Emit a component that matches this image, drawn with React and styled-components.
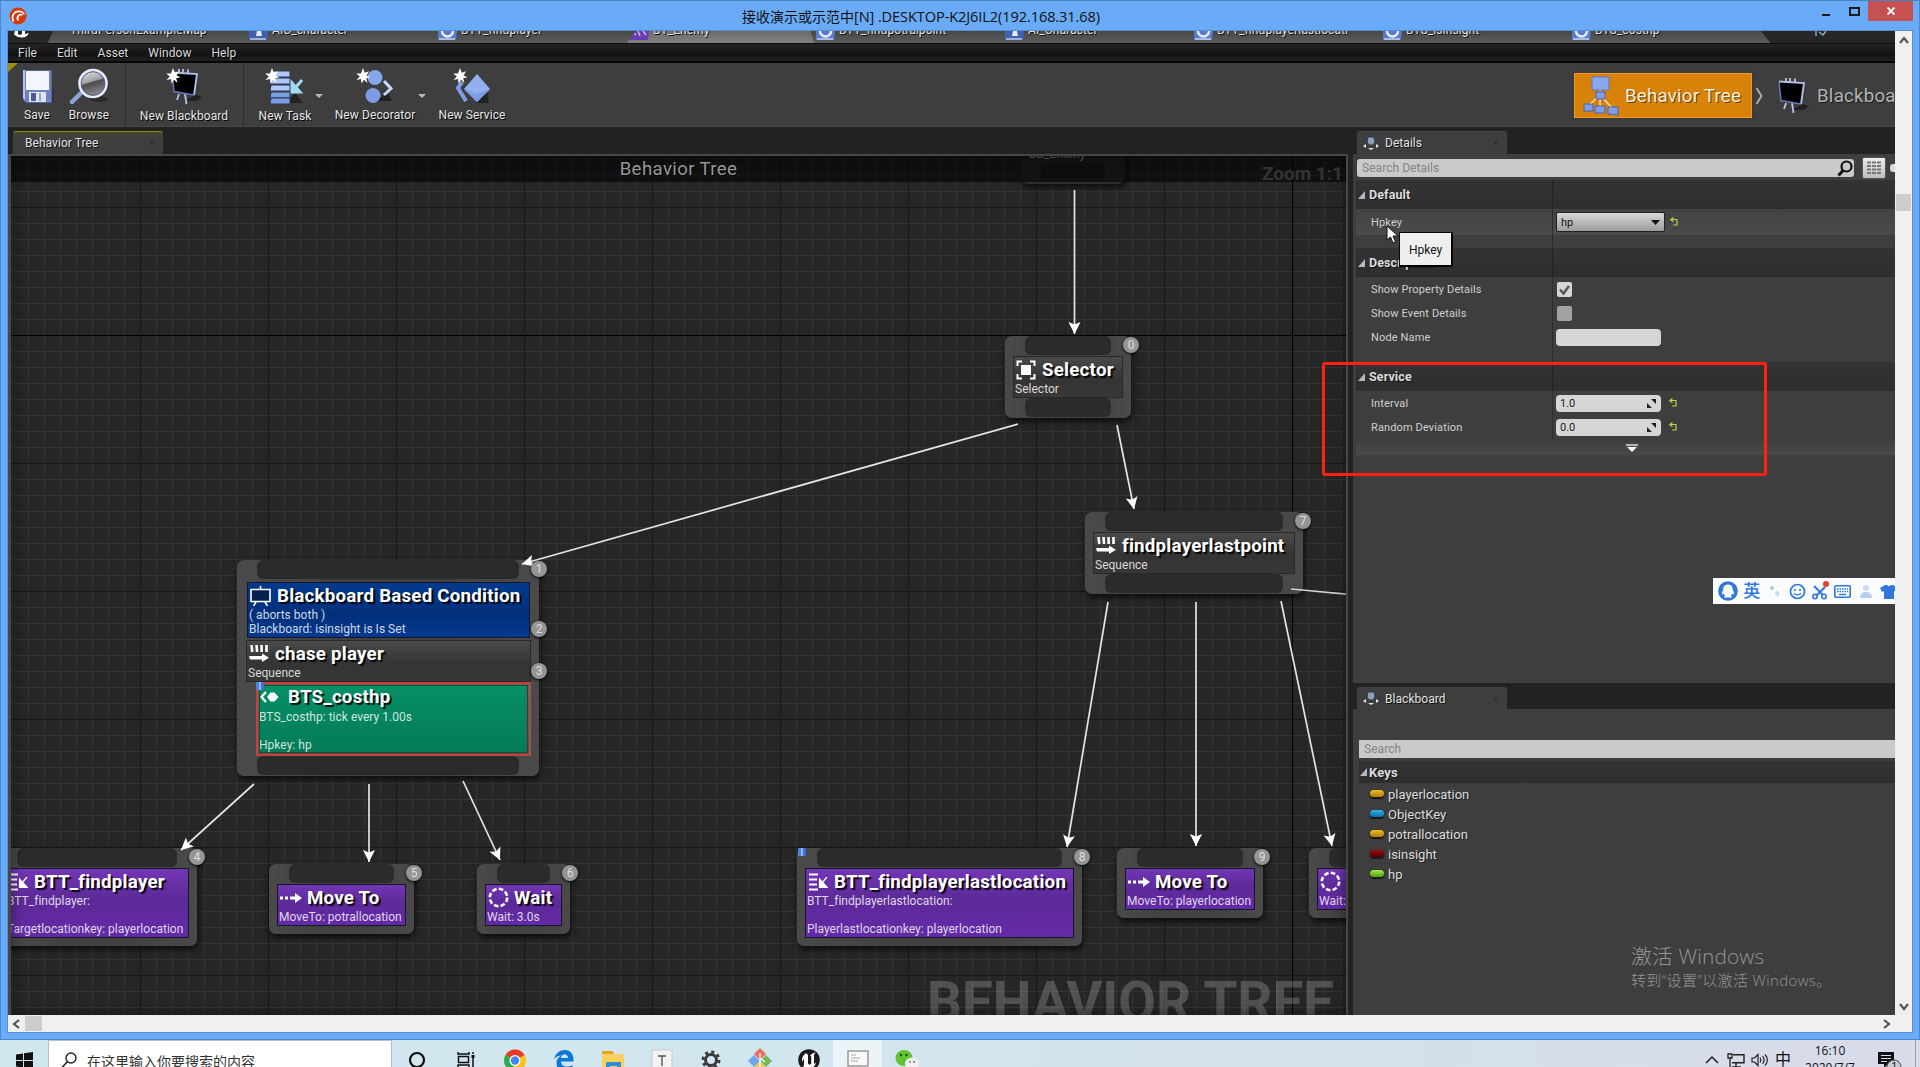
import React from "react";
import styled, { createGlobalStyle, css } from "styled-components";

const Global = createGlobalStyle`
  * { box-sizing: border-box; }
  html, body { margin: 0; padding: 0; overflow: hidden; }
  body { font-family: Roboto, "Noto Sans CJK SC", sans-serif; color: #d4d4d4; }
  svg { display: block; flex: none; }
`;

/* ---------- window frame ---------- */
const Screen = styled.div`
  width: 1920px; height: 1067px; display: flex; flex-direction: column; overflow: hidden;
`;
const Frame = styled.div`
  position: relative; height: 1040px; width: 1920px; background: #6aabf7;
  border: 1px solid #4a87cf; border-top-color: #4784bd; padding: 0 7px 7px;
  display: flex; flex-direction: column;
`;
const TitleBar = styled.div`
  height: 29px; flex: none; display: flex; align-items: flex-start;
`;
const TitleLogo = styled.div`width: 734px; padding: 6px 0 0 1px;`;
const TitleText = styled.div`
  color: #111; font: 14.6px "Open Sans", "Noto Sans CJK SC", sans-serif; line-height: 31px;
  letter-spacing: -0.11px; white-space: nowrap;
  span { font-size: 14px; letter-spacing: 0; }
`;
const Controls = styled.div`width: 160px; display: flex; justify-content: flex-end; margin: 0 -1px 0 auto;`;
const Close = styled.div`
  width: 45px; height: 20px; background: #c75050; display: flex; align-items: center; justify-content: center;
`;
const CtlBox = styled.div`width: 28px; height: 20px; display: flex; align-items: center; justify-content: center;`;
const Client = styled.div`
  flex: 1; min-height: 0; display: grid; grid-template-columns: 1887px 17px; grid-template-rows: 984px 17px;
  outline: 1px solid #5490d2;
`;
const VBar = styled.div`
  background: #f0f0f0; display: flex; flex-direction: column; align-items: center; padding: 5px 0 4px;
`;
const VThumb = styled.div`width: 15px; height: 17px; background: #cdcdcd; margin-top: 150px; margin-bottom: auto;`;
const HBar = styled.div`
  grid-column: 1 / 3; background: #f0f0f0; display: flex; align-items: center; padding: 0 21px 0 4px;
`;
const HThumb = styled.div`width: 17px; height: 15px; background: #cdcdcd; margin-left: 5px; margin-right: auto;`;
const Editor = styled.div`
  position: relative; overflow: hidden; background: #222; display: flex; flex-direction: column;
`;

/* ---------- document tabs and menu ---------- */
const DocTabs = styled.div`
  height: 13px; flex: none; display: flex; background: linear-gradient(#474747, #5c5c5c);
  border-bottom: 1px solid #0c0c0c; overflow: hidden;
`;
const DocHome = styled.div`width: 45px; height: 12px; background: #272727; clip-path: polygon(0 0, 100% 0, 88% 100%, 0 100%); padding-left: 5px;`;
const DocTab = styled.div`
  width: ${(p) => p.w || 189}px; height: 12px; overflow: hidden; display: flex; gap: 4px; flex: none;
  background: ${(p) => (p.$active ? "linear-gradient(#6a6a6a,#828282)" : "transparent")};
  padding-left: ${(p) => p.pad || 0}px;
  clip-path: ${(p) => (p.$active ? "polygon(5% 0, 97% 0, 99% 100%, 0 100%)" : "none")};
`;
const DocLabel = styled.span`
  font-size: 12px; line-height: 14px; margin-top: -8px; color: #e2e2e2; white-space: nowrap; text-shadow: 1px 1px 0 #111; letter-spacing: .1px;
`;
const DocEnd = styled.div`flex: 1; background: #262626; clip-path: polygon(0 0, 100% 0, 100% 100%, 7% 100%); padding-left: 52px;`;
const MenuBar = styled.div`
  height: 19px; flex: none; background: linear-gradient(#242424, #131313 60%, #202020);
  border-bottom: 2px solid #060606; display: flex; align-items: center; padding-left: 10px; gap: 20px;
  font-size: 12px; color: #dadada; text-shadow: 1px 1px 0 #000; letter-spacing: .05px;
`;

/* ---------- toolbar ---------- */
const Toolbar = styled.div`
  height: 64px; flex: none; background: #3e3e3e; border-bottom: 1px solid #484848; display: flex; padding-left: 4px;
  position: relative;
`;
const Corner = styled.div`
  position: absolute; left: 0; top: 0; width: 10px; height: 9px; background: #a08c14; clip-path: polygon(0 0, 100% 0, 0 100%);
`;
const Tool = styled.div`
  width: ${(p) => p.w}px; margin-left: ${(p) => p.ml || 0}px; display: flex; flex-direction: column; align-items: center; padding-top: 5px;
`;
const ToolLabel = styled.div`
  font-size: 12px; line-height: 16px; margin-top: 3px; white-space: nowrap; color: #e6e6e6; text-shadow: 1px 1px 0 #000; letter-spacing: .1px;
`;
const Sep = styled.div`width: 1px; background: #2b2b2b; margin: 2px 0 0 ${(p) => p.ml}px;`;
const Caret = styled.div`width: 8px; height: 4px; margin-top: 31px; background: #b8b8b8; clip-path: polygon(0 0, 100% 0, 50% 100%);`;
const Modes = styled.div`margin-left: auto; display: flex; align-items: center; width: 321px; font-size: 18.7px; letter-spacing: .22px; padding-top: 2px;`;
const Mode = styled.div`
  height: 45px; display: flex; align-items: center; white-space: nowrap; flex: none;
  ${(p) => p.$on ? css`width: 178px; background: #d9820a; border: 1px solid #f09a1e; outline: 2px solid #3a3c42; padding-left: 8px; color: #f4ecdc; gap: 6px;`
    : css`padding-left: 9px; color: #b2b2b2; gap: 8px;`}
  text-shadow: 1px 1px 0 rgba(0,0,0,.55);
`;
const ModeArrow = styled.div`width: 12px; padding-left: 3px;`;

/* ---------- docking ---------- */
const Dock = styled.div`flex: 1; min-height: 0; display: flex; padding-top: 4px;`;
const GraphPane = styled.div`width: 1340px; margin-right: 5px; display: flex; flex-direction: column;`;
const SidePane = styled.div`flex: 1; min-width: 0; display: flex; flex-direction: column;`;
const TabStrip = styled.div`height: ${(p) => p.h || 23}px; flex: none; display: flex; padding-left: ${(p) => p.pl}px;`;
const Tab = styled.div`
  width: 150px; background: ${(p) => (p.$active ? "linear-gradient(#47472f, #3e3e3e 30%)" : "#3e3e3e")};
  border-top: ${(p) => (p.$active ? "1px solid #8c8c22" : "1px solid #444")}; border-radius: 3px 3px 0 0;
  display: flex; align-items: center; gap: 6px; padding: 0 9px 0 ${(p) => p.pl}px;
  font-size: 12px; color: #e2e2e2; text-shadow: 1px 1px 0 #111; white-space: nowrap; letter-spacing: .05px;
`;
const TabX = styled.span`margin-left: auto; font-size: 9px; color: #262626; text-shadow: none;`;

/* ---------- graph ---------- */
const Canvas = styled.div`
  position: relative; flex: 1; overflow: hidden; border: solid #474747; border-width: 2px 2px 0 3px;
  background-color: #262626;
`;
const Shade = styled.div`position: absolute; inset: 0; box-shadow: inset 0 0 14px rgba(0,0,0,.5);`;
const Plane = styled.div`position: absolute; left: -11px; top: -156px; width: 1360px; height: 1020px;`;
const Wires = styled.svg`position: absolute; left: 0; top: 0;`;
const GraphTitle = styled.div`
  position: absolute; left: 0; right: 0; top: 0; height: 26px; background: rgba(0,0,0,.58);
  display: flex; justify-content: center; align-items: center; font-size: 18.7px; letter-spacing: .35px; color: #979797; text-shadow: 1px 1px 0 #000;
`;
const Zoom = styled.div`position: absolute; right: 3px; top: 6px; font-size: 19px; font-weight: 700; color: #333; line-height: 24px;`;
const Watermark = styled.div`
  position: absolute; left: 916px; top: 814px; font-size: 56px; line-height: 64px; font-weight: 700; white-space: nowrap;
  color: rgba(255,255,255,.2); transform-origin: 0 0; transform: scaleX(.978);
`;
const NodeBox = styled.div`
  position: absolute; left: ${(p) => p.x}px; top: ${(p) => p.y}px; width: ${(p) => p.w}px; height: ${(p) => p.h}px;
  background: linear-gradient(90deg, #4a4a4a, #424242 30%, #424242 70%, #4a4a4a); border-radius: 7px;
  box-shadow: 1px 3px 6px rgba(0,0,0,.75); display: flex; flex-direction: column; padding: 0 8px;
`;
const RootNode = styled(NodeBox)`background: #2e2e2e; color: #999;`;
const Pin = styled.div`height: 19px; flex: none; margin: 0 12px; background: #2b2b2b; border-radius: 6px;`;
const fills = {
  gray: "linear-gradient(#4a4a4a, #343434 55%, #383838)",
  blue: "linear-gradient(#043a8c, #022f7c 60%, #043a8e)",
  green: "linear-gradient(#069068, #047a58)",
  purple: "linear-gradient(#7236b4, #5c2a98 45%, #642aa8)",
};
const Part = styled.div`
  height: ${(p) => p.h}px; margin: ${(p) => p.m || "1px 0 0"}; flex: none; padding-left: ${(p) => (p.$picked ? 0 : 1)}px;
  background: ${(p) => fills[p.$tone]}; border: 1px solid ${(p) => (p.$tone === "gray" ? "#292929" : "#15152c")};
  ${(p) => p.$picked && css`border: 2px solid #c8403e; outline: 1px solid #6a2624; outline-offset: -4px; padding-left: 1px;`}
`;
const Head = styled.div`display: flex; align-items: center; height: ${(p) => (p.$tall ? 26 : 25)}px; gap: ${(p) => p.g || 6}px; padding-left: 1px;`;
const Name = styled.span`
  font-size: 18.7px; font-weight: 700; letter-spacing: .24px; color: #fff; white-space: nowrap; text-shadow: 2px 2px 1px rgba(0,0,0,.9);
`;
const Line = styled.div`
  font-size: 12px; line-height: 14px; height: 14px; color: rgba(255,255,255,.82); white-space: nowrap; letter-spacing: .02px;
`;
const Badge = styled.div`
  position: absolute; left: ${(p) => p.x - 8}px; top: ${(p) => p.y - 8}px; width: 16px; height: 16px; border-radius: 50%;
  background: #959595; color: #dedede; font-size: 12px; line-height: 16px; text-align: center; box-shadow: 0 1px 3px #000;
`;
const Flag = styled.div`
  position: absolute; left: ${(p) => p.x}px; top: ${(p) => p.y}px; width: 8px; height: 8px;
  background: linear-gradient(90deg, #4f7fe0 30%, #b9d0ff 50%, #3f6fd6 70%);
`;

/* ---------- side panels ---------- */
const Panel = styled.div`
  height: ${(p) => (p.h ? p.h + "px" : "auto")}; flex: ${(p) => (p.h ? "none" : "1")}; background: #3e3e3e;
  padding-left: ${(p) => p.pl}px; display: flex; flex-direction: column; position: relative;
`;
const SearchRow = styled.div`display: flex; height: 26px; padding: 2px 0 0 1px; align-items: center; flex: none;`;
const Search = styled.div`
  width: ${(p) => p.w}px; height: 18px; background: #cacaca; border-radius: ${(p) => p.r || "3px"}; color: #848484; font-size: 12px;
  display: flex; align-items: center; justify-content: space-between; padding: 0 1px 0 5px; flex: none; letter-spacing: .05px;
`;
const ViewBtn = styled.div`
  width: 27px; height: 22px; margin-left: 8px; background: linear-gradient(#ededed, #bcbcbc); border-radius: 2px; border: 1px solid #555;
  display: flex; align-items: center; justify-content: center;
`;
const EyeDot = styled.div`width: 6px; height: 8px; margin-left: 4px; border-radius: 50% 0 0 50%; background: #ddd;`;
const Category = styled.div`
  height: ${(p) => p.h}px; flex: none; background: linear-gradient(#333, #2e2e2e); display: grid; grid-template-columns: 197px 1fr;
  align-items: center; font-size: ${(p) => p.fs || 12.5}px; font-weight: 700; color: #dcdcdc; text-shadow: 1px 1px 0 #161616; letter-spacing: .1px;
`;
const CatName = styled.div`
  display: flex; align-items: center; gap: ${(p) => (p.$plain ? 2 : 4)}px; padding-left: ${(p) => (p.$plain ? 1 : 2)}px; height: 100%;
  border-right: ${(p) => (p.$plain ? "0" : "1px solid #232323")};
`;
const Row = styled.div`
  height: ${(p) => p.h || 24}px; flex: none; display: grid; grid-template-columns: 197px 1fr; font-size: 11px; color: #cfcfcf;
  background: ${(p) => (p.$hover ? "linear-gradient(#424242,#4b4b4b)" : "transparent")};
`;
const RowName = styled.div`display: flex; align-items: center; padding-left: 15px; border-right: 1px solid #2c2c2c; letter-spacing: .13px;`;
const RowValue = styled.div`display: flex; align-items: center; padding-left: ${(p) => p.pl || 3}px; gap: ${(p) => p.g || 8}px;`;
const Combo = styled.div`
  width: 109px; height: 20px; background: linear-gradient(#d8d8d8, #9c9c9c); border: 1px solid #222; border-radius: 2px; color: #151515;
  display: flex; align-items: center; justify-content: space-between; padding: 0 4px;
`;
const Field = styled.div`
  width: 105px; height: 17px; background: #d6d6d6; border-radius: 4px; color: #222; display: flex; align-items: center;
  justify-content: space-between; padding: 0 5px 0 4px;
`;
const Check = styled.div`width: 15px; height: 15px; background: ${(p) => (p.$on ? "#d6d6d6" : "#a2a2a2")}; border-radius: 2px;`;
const Advanced = styled.div`
  height: 13px; flex: none; margin-top: 3px; background: linear-gradient(#424242, #494949); display: flex; justify-content: center;
  padding: 2px 0 0 13px;
`;
const KeyRow = styled.div`height: 20px; display: flex; align-items: center; gap: 4px; padding-left: 11px; font-size: 13px; color: #dcdcdc; text-shadow: 1px 1px 0 #222;`;
const Pill = styled.span`
  width: 14px; height: 7px; border-radius: 4px; background: linear-gradient(${(p) => p.c}, ${(p) => p.d});
  box-shadow: 0 2px 1px #191919, 0 0 1px #111; margin-top: -2px;
`;
const Gap = styled.div`height: ${(p) => p.h}px; flex: none;`;

/* ---------- overlays ---------- */
const RedBox = styled.div`position: absolute; left: 1322px; top: 362px; width: 445px; height: 114px; border: 3px solid #ff2212; border-radius: 3px;`;
const Tip = styled.div`
  position: absolute; left: 1399px; top: 232px; width: 54px; height: 35px; background: #efefef; border: 2px solid #060606; border-top-width: 1px; border-left-width: 1px;
  color: #111; font-size: 12px; display: flex; align-items: center; justify-content: center; padding-top: 2px;
`;
const Cursor = styled.svg`position: absolute; left: 1386px; top: 225px;`;
const Ime = styled.div`
  position: absolute; left: 1713px; top: 578px; width: 182px; height: 26px; background: #fafcff; overflow: hidden;
  display: flex; align-items: center; padding-left: 5px; gap: 5.300px; color: #2f78d8; font-size: 17px; font-weight: 500; line-height: 20px;
`;
const Activate = styled.div`
  position: absolute; left: 1631px; top: 941px; color: #959595; white-space: nowrap; font-family: "Open Sans", "Noto Sans CJK SC", sans-serif;
  font-weight: 300;
`;
const ActBig = styled.div`font-size: 20.8px; line-height: 30px; letter-spacing: .15px;`;
const ActSmall = styled.div`font-size: 15px; line-height: 18px; letter-spacing: .36px;`;

/* ---------- taskbar ---------- */
const Taskbar = styled.div`
  height: 27px; flex: none; display: flex; overflow: hidden; background: linear-gradient(90deg, #d0e6ee 0, #d2e6ef 45%, #d5dfec 75%, #d8dbea 100%);
`;
const StartBtn = styled.div`width: 48px; padding: 12px 0 0 16px; flex: none;`;
const SearchBox = styled.div`
  width: 344px; flex: none; background: #fff; border: 1px solid #b9c0c4; border-bottom: 0; display: flex; padding: 11px 0 0 12px; gap: 10px;
  font: 14px "Noto Sans CJK SC", sans-serif; line-height: 18px; color: #333; white-space: nowrap;
`;
const TaskItem = styled.div`
  width: 49px; height: 27px; flex: none; display: flex; justify-content: center; padding-top: 8px;
  background: ${(p) => (p.$on ? "#eaf3f6" : "transparent")};
`;
const Tray = styled.div`margin-left: auto; width: 215px; display: flex; flex: none; color: #111;`;
const TrayCell = styled.div`
  width: ${(p) => p.w}px; padding: ${(p) => p.t}px 0 0 ${(p) => p.l || 0}px; flex: none; font-size: 16px; line-height: 20px;
`;
const Clock = styled.div`
  width: 76px; font: 12px "Open Sans", sans-serif; line-height: 17px; padding-top: 2px; text-align: center; height: 40px; flex: none;
`;
const ShowDesk = styled.div`width: 1px; background: #9aa3ac; margin-left: 21px;`;

/* ---------- icons ---------- */
const Star = () => <path d="M7 0 L8.7 4.8 L13 3.2 L10.6 7.4 L14.5 9.3 L10.2 10.2 L11.5 15 L8 11.8 L5.5 15.5 L5 11 L.5 12 L3.8 8.4 L.2 5.6 L5 5.5Z" fill="#fff" />;
const SaveI = () => (
  <svg width="33" height="36" viewBox="0 0 33 36"><path d="M5 33 L33 35 L32 18Z" fill="#1c1c1c" opacity=".6" /><path d="M2 2h29v33H5l-3-3z" fill="#7080bc" stroke="#39436c" /><path d="M5 3h23v19H5z" fill="#f4f6ff" /><path d="M8 24h17v10H8z" fill="#e2e6f4" /><path d="M10 25h5v8h-5z" fill="#4c5a90" /><path d="M18 25h2v8h-2z" fill="#98a2cc" /><path d="M2 2l2 0v30l-2-2z" fill="#b8c4ec" /></svg>
);
const BrowseI = () => (
  <svg width="40" height="36" viewBox="0 0 40 36"><defs><linearGradient id="lens" x1="0" x2="0.3" y1="0" y2="1"><stop offset="0" stopColor="#f4f4f6" /><stop offset=".5" stopColor="#a0a0a2" /><stop offset=".56" stopColor="#4c4c4e" /><stop offset="1" stopColor="#8a8a8c" /></linearGradient></defs><ellipse cx="30" cy="31" rx="9" ry="3" fill="#1c1c1c" opacity=".6" /><path d="M12 25 L3 34" stroke="#8fa2d8" strokeWidth="4.500" strokeLinecap="round" /><circle cx="24" cy="15.500" r="13.500" fill="url(#lens)" stroke="#e6ecff" strokeWidth="2.600" /><circle cx="24" cy="15.500" r="11.800" fill="none" stroke="#56607e" /></svg>
);
const Easel = ({ star }) => (
  <svg width="36" height="37" viewBox="0 0 36 37"><path d="M17 33h14l5-4-6-2z" fill="#161616" opacity=".7" /><path d="M13 26l-2 6M19 26l1.500 10M13 5V1M17 5V1M22 5V1.500" stroke="#b7c4e8" strokeWidth="1.800" /><path d="M6 4.500 L31 6 L28 27 L8 23.500Z" fill="#000" /><path d="M6 4.500L31 6L28 27" fill="none" stroke="#b4c2ea" strokeWidth="1.800" /><path d="M6 4.500L8 23.500L28 27" fill="none" stroke="#6478b4" strokeWidth="1.500" />{star && <Star />}</svg>
);
const TaskI = () => (
  <svg width="40" height="37" viewBox="0 0 40 37"><path d="M22 35h16l-8-10z" fill="#161616" opacity=".7" />{[3, 10, 17, 24, 30].map((y) => <path key={y} d={`M6 ${y}h19v6H5z`} fill={y > 20 ? "#7c9ce2" : "#b0c6f6"} stroke="#2c3654" strokeWidth="1" />)}<path d="M37 12 L31 19M27 15v9h8z" stroke="#9fdcf4" strokeWidth="3" fill="#9fdcf4" /><Star /></svg>
);
const DecoI = () => (
  <svg width="38" height="36" viewBox="0 0 38 36"><path d="M20 33h16l-4-8z" fill="#161616" opacity=".7" /><circle cx="19" cy="9.500" r="7.500" fill="#86a6ea" /><circle cx="17" cy="27.500" r="7.500" fill="#7c9ce4" /><path d="M28 13 L35 20.500 L28 27" stroke="#c7d8fa" strokeWidth="3" fill="none" /><Star /></svg>
);
const ServI = () => (
  <svg width="38" height="36" viewBox="0 0 38 36"><path d="M22 35h14l-2-12z" fill="#161616" opacity=".7" /><path d="M9 14 L5 20 L13 33" stroke="#7e9ee6" strokeWidth="4" fill="none" /><path d="M24 6 L37 21 L24 34 L11 21Z" fill="#92b0f0" /><path d="M11 21 L24 34 L37 21 L24 26Z" fill="#7c9ce4" /><Star /></svg>
);
const TreeI = () => (
  <svg width="36" height="40" viewBox="0 0 36 40"><path d="M17 12v22M17 19L4 31M17 19l13 14" stroke="#fbe6c0" strokeWidth="1.500" /><path d="M9 1h17v13H9z" fill="#8aa8f0" stroke="#5a76c0" /><path d="M13 16h9v7h-9zM1 28h9v7H1zM12 30h10v7H12zM25 31h10v8l-10-1z" fill="#7e9eea" stroke="#4a63a6" /></svg>
);
const PanelI = () => (
  <svg width="16" height="15" viewBox="0 0 16 15"><path d="M5 1h6l1 5-2 3H6L4 6z" fill="#8ba0b8" stroke="#26313c" strokeWidth=".8" /><path d="M0 10l3-2v4zM16 10l-3-2v4zM8 14l-3-2h6z" fill="#dfe8ee" /></svg>
);
const Tri = () => <svg width="7" height="8" viewBox="0 0 7 8"><path d="M7 0v8H0z" fill="#b8b8b8" /></svg>;
const Reset = () => <svg width="10" height="10" viewBox="0 0 10 10"><path d="M2 2.500h6v5.500H4M4.500 .5L1.800 2.700l2.700 2" stroke="#c3cc48" strokeWidth="1.200" fill="none" /></svg>;
const Spin = () => <svg width="9" height="9" viewBox="0 0 9 9"><path d="M9 0v5L4 0zM0 9V4l5 5z" fill="#222" /></svg>;
const SelectorI = () => <svg width="20" height="20" viewBox="0 0 20 20"><path d="M1.500 6V1.500H6M14 1.500h4.500V6M18.500 14v4.500H14M6 18.500H1.500V14" fill="none" stroke="#fff" strokeWidth="2" /><path d="M5 5h10v10H5z" fill="#fff" /></svg>;
const SeqI = () => <svg width="20" height="17" viewBox="0 0 20 17"><path d="M2.500 0l.8 7M7.500 0l.6 7M12.500 0l.2 7M17.500 0v7" stroke="#fff" strokeWidth="2.600" /><path d="M0 11h13V8.500l7 4.200-7 4.300v-2.500H1z" fill="#fff" /></svg>;
const BoardI = () => <svg width="21" height="20" viewBox="0 0 21 20"><path d="M1 3.500h19v12H1zM10.500 0v3M6 16l-2.500 4M15 16l2.500 4" fill="#08204e" stroke="#fff" strokeWidth="1.600" /></svg>;
const ServiceI = () => <svg width="19" height="12" viewBox="0 0 19 12"><path d="M6 1L1.500 6 6 11" stroke="#fff" strokeWidth="2.200" fill="none" /><path d="M7 6l3.500-4.500h4L18.500 6l-4 4.500h-4z" fill="#fff" /></svg>;
const BttI = () => <svg width="20" height="18" viewBox="0 0 20 18"><path d="M1 1.500h9M1 6.500h8M1 11.500h8M1 16.500h9" stroke="#fff" strokeWidth="2" /><path d="M19 4L13.500 10.500M11.500 6v8.500h8z" stroke="#fff" strokeWidth="1.200" fill="#fff" /></svg>;
const MoveI = () => <svg width="22" height="12" viewBox="0 0 22 12"><path d="M0 4.500h3v3H0zM5 4.500h3v3H5zM10 4.500h5V1l7 5-7 5V7.500h-5z" fill="#fff" /></svg>;
const WaitI = () => <svg width="21" height="21" viewBox="0 0 21 21"><circle cx="10.500" cy="10.500" r="8.700" fill="none" stroke="#fff" strokeWidth="2.600" strokeDasharray="4.600 2.233" /></svg>;
const Loupe = () => <svg width="16" height="17" viewBox="0 0 16 17"><circle cx="9.500" cy="6.500" r="5" fill="none" stroke="#111" strokeWidth="2.200" /><path d="M6 10.500L1.500 15.500" stroke="#111" strokeWidth="3" /></svg>;
const BarArrow = ({ d, w = 10, h = 8 }) => <svg width={w} height={h} viewBox={`0 0 ${w} ${h}`}><path d={d} fill="none" stroke="#555" strokeWidth="2.200" /></svg>;

/* ---------- data ---------- */
const docs = [
  ["AIC_character*", "#3f62b0"], ["BTT_findplayer*", "#5a7cc8"], ["BT_Enemy*", "#6a3cb0"], ["BTT_findpotralpoint*", "#5a7cc8"],
  ["AI_Character", "#3f62b0"], ["BTT_findplayerlastlocati*", "#5a7cc8"], ["BTS_isinsight*", "#5a7cc8"], ["BTS_costhp*", "#5a7cc8"],
];
const icons = { selector: SelectorI, seq: SeqI, board: BoardI, service: ServiceI, btt: BttI, move: MoveI, wait: WaitI };
const nodes = [
  { x: 1005, y: 336, w: 126, h: 82, out: 1, parts: [{ tone: "gray", h: 42, icon: "selector", name: "Selector", lines: ["Selector"] }] },
  { x: 1085, y: 512, w: 218, h: 82, out: 1, parts: [{ tone: "gray", h: 42, icon: "seq", name: "findplayerlastpoint", lines: ["Sequence"] }] },
  { x: 237, y: 560, w: 302, h: 216, out: 1, parts: [
    { tone: "blue", h: 56, m: "3px 1px 0 2px", icon: "board", name: "Blackboard Based Condition", lines: ["( aborts both )", "Blackboard: isinsight is Is Set"] },
    { tone: "gray", h: 42, m: "2px 0 0 1px", icon: "seq", name: "chase player", lines: ["Sequence"] },
    { tone: "green", h: 74, m: "0 0 0 11px", picked: 1, icon: "service", name: "BTS_costhp", lines: ["BTS_costhp: tick every 1.00s", "", "Hpkey: hp"] },
  ] },
  { x: -3, y: 848, w: 200, h: 98, parts: [{ tone: "purple", h: 70, icon: "btt", name: "BTT_findplayer", lines: ["BTT_findplayer:", "", "Targetlocationkey: playerlocation"] }] },
  { x: 269, y: 864, w: 145, h: 70, parts: [{ tone: "purple", h: 42, icon: "move", name: "Move To", lines: ["MoveTo: potrallocation"] }] },
  { x: 477, y: 864, w: 93, h: 70, parts: [{ tone: "purple", h: 42, icon: "wait", name: "Wait", lines: ["Wait: 3.0s"] }] },
  { x: 797, y: 848, w: 285, h: 98, parts: [{ tone: "purple", h: 70, icon: "btt", name: "BTT_findplayerlastlocation", lines: ["BTT_findplayerlastlocation:", "", "Playerlastlocationkey: playerlocation"] }] },
  { x: 1117, y: 848, w: 146, h: 70, parts: [{ tone: "purple", h: 42, icon: "move", name: "Move To", lines: ["MoveTo: playerlocation"] }] },
  { x: 1309, y: 848, w: 93, h: 70, parts: [{ tone: "purple", h: 42, icon: "wait", name: "Wait", lines: ["Wait: 3.0s"] }] },
];
const headGap = { service: 9, move: 5, wait: 5 };
const badges = [[1131, 345], [539, 569], [539, 629], [539, 671], [197, 857], [414, 873], [570, 873], [1303, 521], [1082, 857], [1262, 857]];
const wires = [
  [1074.5, 190, 1074.5, 334], [1018, 424, 522, 564], [1117, 425, 1134, 509], [254, 784, 181, 850], [369, 784, 369, 862],
  [463, 781, 500, 860], [1108, 602, 1067, 847], [1196, 602, 1196, 846], [1281, 601, 1332, 846],
];
const keys = [["playerlocation", "#f0be28", "#b07c08"], ["ObjectKey", "#36b4ee", "#0a6ca8"], ["potrallocation", "#f0be28", "#b07c08"], ["isinsight", "#9a0a0a", "#5c0000"], ["hp", "#a4e844", "#4fa010"]];

const range = (from, to, step) => Array.from({ length: Math.ceil((to - from) / step) }, (_, i) => from + i * step);

function Grid() {
  return (
    <g shapeRendering="crispEdges">
      {range(12, 1350, 16).map((x) => <path key={"a" + x} d={`M${x + .5} 150V1020`} stroke="#343434" />)}
      {range(159, 1020, 16).map((y) => <path key={"b" + y} d={`M0 ${y + .5}H1350`} stroke="#343434" />)}
      {range(140, 1350, 128).map((x) => <path key={"c" + x} d={`M${x + .5} 150V1020`} stroke={x === 1292 ? "#000" : "#181818"} />)}
      {range(207, 1020, 128).map((y) => <path key={"d" + y} d={`M0 ${y + .5}H1350`} stroke={y === 335 ? "#000" : "#181818"} />)}
    </g>
  );
}

function Graph() {
  return (
    <Canvas>
      <Plane>
        <Wires width="1350" height="1020"><Grid /></Wires>
        {nodes.map((n, i) => (
          <NodeBox key={i} x={n.x} y={n.y} w={n.w} h={n.h}>
            <Pin />
            {n.parts.map((p) => {
              const Icon = icons[p.icon];
              return (
                <Part key={p.name} h={p.h} m={p.m} $tone={p.tone} $picked={p.picked}>
                  <Head g={headGap[p.icon]} $tall={p.picked}><Icon /><Name>{p.name}</Name></Head>
                  {p.lines.map((l, k) => <Line key={k}>{l}</Line>)}
                </Part>
              );
            })}
            {n.out && <Pin />}
          </NodeBox>
        ))}
        <RootNode x={1021} y={120} w={104} h={64}><Gap h={27} /><Line>BB_Enemy</Line></RootNode>
        <Wires width="1350" height="1020">
          <rect x="1041" y="163" width="64" height="18" rx="5" fill="#222" />
          {wires.map(([a, b, c, d]) => (
            <g key={a + "-" + b}>
              <path d={`M${a} ${b}L${c} ${d}`} stroke="#e4e4e4" strokeWidth="1.700" />
              <path transform={`translate(${c} ${d}) rotate(${(Math.atan2(d - b, c - a) * 180) / Math.PI})`} d="M0 0L-12 -6L-9.500 0L-12 6Z" fill="#fff" />
            </g>
          ))}
          <path d="M1291 589L1350 594.500" stroke="#d0d0d0" strokeWidth="1.600" />
        </Wires>
        {badges.map(([x, y], i) => <Badge key={i} x={x} y={y}>{i}</Badge>)}
        <Flag x={256} y={682} /><Flag x={798} y={848} />
      </Plane>
      <Watermark>BEHAVIOR TREE</Watermark>
      <Shade />
      <GraphTitle>Behavior Tree</GraphTitle>
      <Zoom>Zoom 1:1</Zoom>
    </Canvas>
  );
}

function Details() {
  return (
    <Panel h={529} pl={3}>
      <SearchRow>
        <Search w={497}>Search Details<Loupe /></Search>
        <ViewBtn><svg width="14" height="14" viewBox="0 0 14 14"><path d="M0 1.500h14M0 5h14M0 8.500h14M0 12h14" stroke="#777" strokeWidth="2" strokeDasharray="4 1" /></svg></ViewBtn>
        <EyeDot />
      </SearchRow>
      <Category h={29}><CatName><Tri />Default</CatName></Category>
      <Row h={26} $hover><RowName>Hpkey</RowName><RowValue g={4}><Combo>hp<svg width="9" height="5" viewBox="0 0 9 5"><path d="M0 0h9L4.500 5z" fill="#111" /></svg></Combo><Reset /></RowValue></Row>
      <Row h={13}><RowName /></Row>
      <Category h={29}><CatName><Tri />Description</CatName></Category>
      <Row><RowName>Show Property Details</RowName><RowValue pl={4}><Check $on><svg width="15" height="15" viewBox="0 0 15 15"><path d="M3 7.500l3.500 4L12 4" stroke="#555" strokeWidth="2.400" fill="none" /></svg></Check></RowValue></Row>
      <Row><RowName>Show Event Details</RowName><RowValue pl={4}><Check /></RowValue></Row>
      <Row><RowName>Node Name</RowName><RowValue><Field /></RowValue></Row>
      <Row h={13}><RowName /></Row>
      <Category h={29}><CatName><Tri />Service</CatName></Category>
      <Row><RowName>Interval</RowName><RowValue g={7}><Field>1.0<Spin /></Field><Reset /></RowValue></Row>
      <Row><RowName>Random Deviation</RowName><RowValue g={7}><Field>0.0<Spin /></Field><Reset /></RowValue></Row>
      <Advanced><svg width="12" height="9" viewBox="0 0 12 9"><path d="M0 1h12" stroke="#ddd" strokeWidth="1.500" /><path d="M1 3h10L6 8z" fill="#fff" /></svg></Advanced>
    </Panel>
  );
}

function BlackboardPanel() {
  return (
    <Panel pl={6}>
      <Gap h={31} />
      <Search w={540} r="0">Search</Search>
      <Gap h={3} />
      <Category h={22} fs={13}><CatName $plain><Tri />Keys</CatName></Category>
      <Gap h={1} />
      {keys.map(([k, c, d]) => <KeyRow key={k}><Pill c={c} d={d} />{k}</KeyRow>)}
    </Panel>
  );
}

function ImeBar() {
  const b = "#2f78d8";
  return (
    <Ime>
      <svg width="20" height="20" viewBox="0 0 20 20"><circle cx="10" cy="10" r="9.800" fill={b} /><path d="M10 3.500c4 0 4.800 3 4.800 5.500 1.200 2 1.400 3.500 1 4.500l-1.600-1c-.3 1.200-.8 2-1.400 2.600.9.400 1.200.9 1.200 1.400H6c0-.5.3-1 1.200-1.400-.6-.6-1.100-1.400-1.400-2.600l-1.600 1c-.4-1-.2-2.500 1-4.500 0-2.500.8-5.500 4.800-5.500z" fill="#fff" /></svg>
      英
      <svg width="18" height="18" viewBox="0 0 18 18"><circle cx="6" cy="6" r="2" fill="#a9c6ec" /><circle cx="11" cy="11" r="2" fill="#c4d8f2" /><path d="M13 11c0 2-1 3-2 4" stroke="#c4d8f2" strokeWidth="1.500" fill="none" /></svg>
      <svg width="17" height="17" viewBox="0 0 17 17"><circle cx="8.500" cy="8.500" r="7" fill="none" stroke={b} strokeWidth="1.700" /><circle cx="6" cy="7" r="1.100" fill={b} /><circle cx="11" cy="7" r="1.100" fill={b} /><path d="M5 10c1.500 2.500 5.500 2.500 7 0" stroke={b} strokeWidth="1.400" fill="none" /></svg>
      <svg width="18" height="20" viewBox="0 0 18 20"><path d="M3 5l9 9M14 6l-9 9" stroke={b} strokeWidth="2" /><circle cx="4" cy="15.500" r="2.200" fill="none" stroke={b} strokeWidth="1.600" /><circle cx="13" cy="15.500" r="2.200" fill="none" stroke={b} strokeWidth="1.600" /><circle cx="15" cy="3" r="3" fill="#ee3a26" /></svg>
      <svg width="17" height="13" viewBox="0 0 17 13"><rect x=".8" y=".8" width="15.400" height="11.400" rx="1" fill="none" stroke={b} strokeWidth="1.600" /><path d="M3 4h11M3 6.500h11" stroke={b} strokeWidth="1.500" strokeDasharray="1.500 1" /><path d="M5 9.500h7" stroke={b} strokeWidth="1.400" /></svg>
      <svg width="18" height="15" viewBox="0 0 18 15"><circle cx="9" cy="4" r="3" fill="#c9daf2" /><path d="M3 14c0-4 3-6 6-6s6 2 6 6z" fill="#b8d0f0" /></svg>
      <svg width="18" height="15" viewBox="0 0 18 15"><path d="M5 1h2c1 1.500 3 1.500 4 0h2l5 3-2 4-2-1v8H4V7L2 8 0 4z" fill={b} /></svg>
    </Ime>
  );
}

const taskIcons = [
  <svg width="18" height="22" viewBox="0 0 18 22"><circle cx="9" cy="12" r="7" fill="none" stroke="#111" strokeWidth="2.200" /></svg>,
  <svg width="18" height="22" viewBox="0 0 18 22"><path d="M1 4v2h11V4M1 19v-2h11v2M1.500 8.500h10v6h-10zM16 4v2M16 9v10" fill="none" stroke="#111" strokeWidth="1.500" /><path d="M14.500 7h3v3h-3z" fill="#111" /></svg>,
  <svg width="24" height="24" viewBox="0 0 24 24"><circle cx="12" cy="12.500" r="11" fill="#fbc116" /><path d="M12 12.500L2.500 7a11 11 0 0 1 19 0z" fill="#e33b2e" /><path d="M12 12.500L2.500 7a11 11 0 0 0 7 16.200z" fill="#2da94f" /><circle cx="12" cy="12.500" r="5.500" fill="#fff" /><circle cx="12" cy="12.500" r="4.200" fill="#4584f0" /></svg>,
  <svg width="24" height="24" viewBox="0 0 24 24"><path d="M2 12C3 5 8 2 13 2c6 0 9 5 8.500 11.500H9c0 3 2.500 5 6 5 2 0 4-.6 5.500-1.600V22c-8 4-16 .5-16-7 0-4 2.500-6.500 5-7.500C5 8 3 9.500 2 12zM9 10h7c0-5-6.500-5-7 0z" fill="#0b78d8" /></svg>,
  <svg width="24" height="22" viewBox="0 0 24 22"><path d="M1 3h10l2 2v17H1z" fill="#e8a31c" /><path d="M1 6h22v16H1z" fill="#fbd05e" /><path d="M5 14h15v8h-4v-4h-7v4H5z" fill="#2c8fd8" /></svg>,
  <svg width="22" height="24" viewBox="0 0 22 24"><path d="M1 2h20v22H1z" fill="#f3f3f3" stroke="#c9c9c9" /><path d="M7 8h8M11 8v10" stroke="#555" strokeWidth="1.400" /></svg>,
  <svg width="20" height="24" viewBox="0 0 20 24"><circle cx="10" cy="12" r="5.500" fill="none" stroke="#3a3a3a" strokeWidth="3" /><circle cx="10" cy="12" r="8" fill="none" stroke="#3a3a3a" strokeWidth="3" strokeDasharray="3 3.280" /></svg>,
  <svg width="24" height="24" viewBox="0 0 24 24"><path d="M12 0l6 6-6 6-6-6z" fill="#ec6a60" /><path d="M6 7l6 6-6 6-6-6z" fill="#6fa4ee" /><path d="M18 7l6 6-6 6-6-6z" fill="#74b85c" /><path d="M12 13l6 6-6 6-6-6z" fill="#ecc45c" /><path d="M12 5v14M12 10l5 4" stroke="#fff" strokeWidth="1.200" /></svg>,
  <svg width="22" height="24" viewBox="0 0 22 24"><circle cx="11" cy="12" r="10.800" fill="#1a1a1a" /><path d="M8 5c-3 2-4.500 5-4 9 1-2 1.500-3 2-3v6l-1 1c2 2 4 2.500 6 2.500l1.500-1.500 1.500 1c2-1 3.500-3 4-5.500l-2 1.500V7c1-2 2-2.500 2-2.500-2 0-4 1-6 3l1.200.8V16l-2 .8L10 15.500V7z" fill="#fff" /></svg>,
  <svg width="22" height="22" viewBox="0 0 22 22"><path d="M1 3h20v15H1z" fill="#f8f8f8" stroke="#999" strokeWidth="1.500" /><path d="M4 7h5M4 10h9M4 13h7" stroke="#aaa" /><path d="M16 18h5v2h-5z" fill="#bbb" /></svg>,
  <svg width="24" height="22" viewBox="0 0 24 22"><ellipse cx="9" cy="10" rx="8.500" ry="8" fill="#62c432" /><circle cx="6" cy="7" r="1.200" fill="#245010" /><circle cx="11.500" cy="7" r="1.200" fill="#245010" /><ellipse cx="17" cy="15.500" rx="7" ry="6" fill="#f2f2f2" /><circle cx="15" cy="14" r="1" fill="#777" /><circle cx="19" cy="14" r="1" fill="#777" /></svg>,
];

export default function App() {
  return (
    <Screen>
      <Global />
      <Frame>
        <TitleBar>
          <TitleLogo><svg width="18" height="18" viewBox="0 0 18 18"><circle cx="9" cy="9" r="8.500" fill="#d8390c" /><path d="M4.500 14.500C1.500 8 6 3 12.500 4.800C14.500 5.600 15 7 15 7.500M13.500 7.800C9 6.500 7 11 9.500 13.500C8 12 8.500 9.500 10 8.500" stroke="#fff" strokeWidth="1.700" fill="none" /></svg></TitleLogo>
          <TitleText><span>接收演示或示范中</span>[N] .DESKTOP-K2J6IL2(192.168.31.68)</TitleText>
          <Controls>
            <CtlBox><svg width="8" height="14" viewBox="0 0 8 14"><path d="M0 11h8" stroke="#1b1b1b" strokeWidth="2" /></svg></CtlBox>
            <CtlBox><svg width="11" height="9" viewBox="0 0 11 9"><path d="M1 1h9v7H1z" fill="none" stroke="#1b1b1b" strokeWidth="2" /></svg></CtlBox>
            <Close><svg width="8" height="8" viewBox="0 0 8 8"><path d="M.5 .5l7 7M7.500 .5l-7 7" stroke="#fff" strokeWidth="1.900" /></svg></Close>
          </Controls>
        </TitleBar>
        <Gap h={1} />
        <Client>
          <Editor>
            <DocTabs>
              <DocHome><svg width="18" height="7" viewBox="0 0 18 7"><path d="M2 0h3v3l2 1 2-1V0h3v3l4-1c-2 4-5 4.500-7 4.500S2 5.500 1 3z" fill="#fff" /></svg></DocHome>
              <DocTab w={196} pad={17}><DocLabel>ThirdPersonExampleMap</DocLabel></DocTab>
              {docs.map(([name, c], i) => (
                <DocTab key={name} w={189} $active={i === 2} pad={i === 2 ? 3 : 0}>
                  <svg width="19" height="9" viewBox="0 0 19 9"><path d="M0 0h19L18 9H0z" fill={c} />{i !== 2 && <path d="M1 8h16" stroke="#dfe8ff" strokeWidth="1.200" />}{c === "#5a7cc8" ? <circle cx="9.500" cy="0" r="5.500" fill="none" stroke="#e8efff" strokeWidth="2.400" /> : c === "#6a3cb0" ? <path d="M3 1l3 3M8 0l2 5M13 0l3 4" stroke="#cfc0ee" strokeWidth="1.400" /> : <path d="M8 0h4l1 5H7z" fill="#e4edff" />}</svg>
                  <DocLabel>{name}</DocLabel>
                </DocTab>
              ))}
              <DocEnd><svg width="14" height="6" viewBox="0 0 14 6"><path d="M3 0v5M6 1l4 3 3-4" stroke="#8fb0c8" strokeWidth="1.400" fill="none" /></svg></DocEnd>
            </DocTabs>
            <MenuBar><span>File</span><span>Edit</span><span>Asset</span><span>Window</span><span>Help</span></MenuBar>
            <Toolbar>
              <Corner />
              <Tool w={50}><SaveI /><ToolLabel>Save</ToolLabel></Tool>
              <Tool w={54}><BrowseI /><ToolLabel>Browse</ToolLabel></Tool>
              <Sep ml={9} />
              <Tool w={116}><Easel star /><ToolLabel>New Blackboard</ToolLabel></Tool>
              <Sep ml={1} />
              <Tool w={60} ml={11}><TaskI /><ToolLabel>New Task</ToolLabel></Tool>
              <Caret />
              <Tool w={86} ml={9}><DecoI /><ToolLabel>New Decorator</ToolLabel></Tool>
              <Caret />
              <Tool w={72} ml={10}><ServI /><ToolLabel>New Service</ToolLabel></Tool>
              <Modes>
                <Mode $on><TreeI />Behavior Tree</Mode>
                <ModeArrow><svg width="9" height="18" viewBox="0 0 9 18"><path d="M1.500 1l5 8-5 8" stroke="#b0b0b0" strokeWidth="1.800" fill="none" /></svg></ModeArrow>
                <Mode><Easel />Blackboard</Mode>
              </Modes>
            </Toolbar>
            <Dock>
              <GraphPane>
                <TabStrip pl={5}><Tab pl={12} $active>Behavior Tree<TabX>×</TabX></Tab></TabStrip>
                <Graph />
              </GraphPane>
              <SidePane>
                <TabStrip pl={4}><Tab pl={6}><PanelI />Details<TabX>×</TabX></Tab></TabStrip>
                <Details />
                <Gap h={4} />
                <TabStrip h={22} pl={4}><Tab pl={6}><PanelI />Blackboard<TabX>×</TabX></Tab></TabStrip>
                <BlackboardPanel />
              </SidePane>
            </Dock>
          </Editor>
          <VBar>
            <BarArrow d="M1 7L5 2L9 7" /><VThumb /><BarArrow d="M1 1L5 6L9 1" />
          </VBar>
          <HBar>
            <BarArrow w={8} h={10} d="M7 1L2 5L7 9" /><HThumb /><BarArrow w={8} h={10} d="M1 1L6 5L1 9" />
          </HBar>
        </Client>
      </Frame>
      <Taskbar>
        <StartBtn><svg width="17" height="17" viewBox="0 0 17 17"><path d="M0 2.500l7-1V8H0zM8 1.300L17 0v8H8zM0 9h7v6.500l-7-1zM8 9h9v8l-9-1.300z" fill="#111" /></svg></StartBtn>
        <SearchBox><svg width="16" height="17" viewBox="0 0 16 17"><circle cx="10" cy="6" r="5" fill="none" stroke="#222" strokeWidth="1.400" /><path d="M6.500 9.500L1 15.500" stroke="#222" strokeWidth="1.600" /></svg>在这里输入你要搜索的内容</SearchBox>
        {taskIcons.map((ic, i) => <TaskItem key={i} $on={i === 9}>{ic}</TaskItem>)}
        <Tray>
          <TrayCell w={22} t={15}><svg width="14" height="9" viewBox="0 0 14 9"><path d="M1 8l6-6 6 6" stroke="#222" strokeWidth="1.500" fill="none" /></svg></TrayCell>
          <TrayCell w={24} t={13}><svg width="18" height="15" viewBox="0 0 18 15"><path d="M6 1.700h11v8H5M9 10v4M5 14h9" fill="none" stroke="#222" strokeWidth="1.400" /><path d="M1 1h4v4H1zM3 5v9" fill="none" stroke="#222" strokeWidth="1.300" /></svg></TrayCell>
          <TrayCell w={24} t={13}><svg width="18" height="14" viewBox="0 0 18 14"><path d="M1 5h2.500L7 1.500v11L3.500 9H1z" fill="none" stroke="#222" strokeWidth="1.200" /><path d="M9 4.500c1 1.500 1 3.500 0 5M11.500 3c2 2.500 2 5.500 0 8M14 1.500c3 3.500 3 7.500 0 11" fill="none" stroke="#222" strokeWidth="1.200" /></svg></TrayCell>
          <TrayCell w={17} t={10}>中</TrayCell>
          <Clock>16:10<br />2020/7/7</Clock>
          <TrayCell w={26} t={12} l={10}><svg width="24" height="18" viewBox="0 0 24 18"><path d="M0 0h16v12h-6l-4 4v-4H0z" fill="#111" /><path d="M3 3.500h10M3 6.500h10M3 9.500h6" stroke="#dde" strokeWidth="1.200" /><circle cx="16" cy="15" r="7" fill="#c9ced6" stroke="#444" /><text x="13.500" y="18" fontSize="10" fontFamily="Roboto" fill="#111">1</text></svg></TrayCell>
          <ShowDesk />
        </Tray>
      </Taskbar>
      <RedBox />
      <Cursor width="15" height="20" viewBox="0 0 15 20"><path d="M1 1v14l3.500-3 2.500 6 2.500-1-2.500-6H12z" fill="#fff" stroke="#111" /></Cursor>
      <Tip>Hpkey</Tip>
      <ImeBar />
      <Activate><ActBig>激活 Windows</ActBig><ActSmall>转到“设置”以激活 Windows。</ActSmall></Activate>
    </Screen>
  );
}
